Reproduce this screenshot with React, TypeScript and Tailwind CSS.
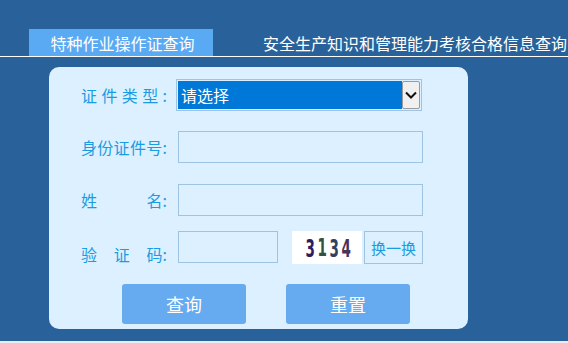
import React from "react";

const font = { fontFamily: '"Noto Sans CJK SC", "Noto Sans", sans-serif' };
const digitFont = { fontFamily: '"DejaVu Sans Condensed", "Liberation Sans", sans-serif' };

function Label({ chars }: { chars: string[] }) {
  return (
    <div className="flex w-[86px] justify-between text-[16px] leading-none text-[#1a9ce2]">
      {chars.map((c, i) => (
        <span key={i}>{c}</span>
      ))}
    </div>
  );
}

export default function App() {
  return (
    <div className="h-[343px] w-full bg-[#ececec]" style={font}>
      <div className="h-[341px] w-full bg-[#29629a] pt-[29px]">
        <div className="flex h-[27px] items-stretch">
          <div className="ml-[29px] flex w-[184px] items-center justify-center bg-[#59aaf3] pl-[3px] text-[16px] leading-none text-white">
            特种作业操作证查询
          </div>
          <div className="ml-[50px] flex items-center text-[16px] leading-none text-white">
            安全生产知识和管理能力考核合格信息查询
          </div>
        </div>
        <div className="h-px w-full bg-white" />
        <div className="ml-[49px] mt-[10px] h-[262px] w-[419px] rounded-[10px] bg-[#dcf0ff] pl-[32px] pt-[12px]">
          {/* row 1 */}
          <div className="flex h-[32px] items-center">
            <Label chars={["证", "件", "类", "型", ":"]} />
            <div className="ml-[9px] flex h-[32px] w-[246px] border border-[#9fc3e3] p-px">
              <div className="flex flex-1 items-center bg-[#0078d7] pl-[3px] text-[16px] leading-none text-white">
                请选择
              </div>
              <div className="flex w-[18px] items-center justify-center rounded-[2px] border border-[#9a9a9a] bg-[#f0f0f0]">
                <svg width="12" height="8" viewBox="0 0 12 8">
                  <path d="M1 1.5 L6 6.5 L11 1.5" fill="none" stroke="#111" strokeWidth="2" />
                </svg>
              </div>
            </div>
          </div>
          {/* row 2 */}
          <div className="mt-[20px] flex h-[32px] items-center">
            <Label chars={["身", "份", "证", "件", "号", ":"]} />
            <div className="ml-[11px] h-[32px] w-[245px] border border-[#9fc3e3] bg-[#ddf0ff]" />
          </div>
          {/* row 3 */}
          <div className="mt-[21px] flex h-[32px] items-center">
            <Label chars={["姓", "名:"]} />
            <div className="ml-[11px] h-[32px] w-[245px] border border-[#9fc3e3] bg-[#ddf0ff]" />
          </div>
          {/* row 4 */}
          <div className="mt-[15px] flex h-[33px] items-start">
            <div className="mt-[15px]">
              <Label chars={["验", "证", "码:"]} />
            </div>
            <div className="ml-[11px] h-[32px] w-[100px] border border-[#9fc3e3] bg-[#ddf0ff]" />
            <div className="ml-[14px] flex h-[33px] w-[70px] items-center bg-white pl-[11px]">
              <span className="mt-[1px] inline-block w-[12px] scale-x-[0.6] text-center text-[25px] font-bold leading-none text-[#2e1d5e]" style={digitFont}>3</span>
              <span className="-mt-[1px] inline-block w-[12px] scale-x-[0.6] text-center text-[25px] font-bold leading-none text-[#2f5242]" style={digitFont}>1</span>
              <span className="mt-[2px] inline-block w-[12px] scale-x-[0.6] text-center text-[25px] font-bold leading-none text-[#33425c]" style={digitFont}>3</span>
              <span className="mt-[2px] inline-block w-[12px] scale-x-[0.6] text-center text-[25px] font-bold leading-none text-[#4b3159]" style={digitFont}>4</span>
            </div>
            <div className="ml-[2px] flex h-[33px] w-[59px] items-center justify-center border border-[#9fc3e3] text-[15px] leading-none text-[#1a9ce2]">
              换一换
            </div>
          </div>
          {/* buttons */}
          <div className="ml-[41px] mt-[20px] flex gap-[40px]">
            <div className="flex h-[40px] w-[124px] items-center justify-center rounded-[3px] bg-[#66aaef] text-[18px] leading-none text-white">
              查询
            </div>
            <div className="flex h-[40px] w-[124px] items-center justify-center rounded-[3px] bg-[#66aaef] text-[18px] leading-none text-white">
              重置
            </div>
          </div>
        </div>
      </div>
    </div>
  );
}
